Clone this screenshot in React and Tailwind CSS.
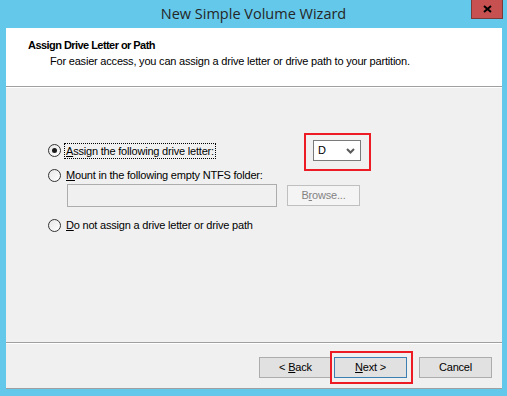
import React from 'react';

const bodyFont = { fontFamily: '"Liberation Sans", Arial, sans-serif' };

function Radio({ checked }) {
    return (
        <span className="flex h-[13px] w-[13px] shrink-0 items-center justify-center rounded-full border border-[#333333] bg-gradient-to-br from-[#e6e6e6] to-white">
            {checked && <span className="h-[5px] w-[5px] rounded-full bg-[#1a1a1a]" />}
        </span>
    );
}

function Btn({ children, isDefault, disabled, className = '' }) {
    return (
        <button
            type="button"
            className={
                'flex h-[21px] w-[73px] items-center justify-center border text-[11px] tracking-[-0.2px] ' +
                (disabled
                    ? 'border-[#bfbfbf] bg-[#f4f4f4] text-[#838383] '
                    : isDefault
                        ? 'border-[#3c7fb1] bg-[#e1e1e1] text-black '
                        : 'border-[#adadad] bg-[#e1e1e1] text-black ') +
                className
            }
        >
            <span className="whitespace-pre">{children}</span>
        </button>
    );
}

export default function App() {
    return (
        <div className="flex h-[396px] w-[507px] flex-col bg-[#63c8ea]" style={bodyFont}>
            {/* title bar */}
            <div className="relative flex h-[28px] items-center justify-center">
                <span
                    className="text-[14.5px] text-[#262626]"
                    style={{ fontFamily: '"Open Sans", "Noto Sans", sans-serif' }}
                >
                    New Simple Volume Wizard
                </span>
                <div className="absolute right-[4px] top-0 flex h-[19px] w-[32px] items-center justify-center border border-t-0 border-[#7b3a3a] bg-[#c75050]">
                    <svg width="9" height="8" viewBox="0 0 9 8">
                        <path d="M1 1 L8 7 M8 1 L1 7" stroke="#000" strokeWidth="2" />
                    </svg>
                </div>
            </div>

            {/* client */}
            <div className="ml-[6px] mr-[5px] flex h-[361px] flex-col bg-[#f0f0f0]">
                <div className="flex h-[58px] flex-col bg-white pl-[22px] pt-[10px]">
                    <span className="text-[11px] font-bold leading-[14px] tracking-[-0.55px] text-black">
                        Assign Drive Letter or Path
                    </span>
                    <span className="mt-[2px] pl-[22px] text-[11px] leading-[14px] tracking-[-0.2px] text-black">
                        For easier access, you can assign a drive letter or drive path to your partition.
                    </span>
                </div>
                <div className="h-[2px] border-t border-[#a0a0a0] bg-white" />

                <div className="flex h-[254px] flex-col pl-[42px] pt-[52px] text-[11px] tracking-[-0.2px] text-black">
                    <div className="flex h-[21px] items-center">
                        <div className="flex w-[265px] items-center gap-[4px]">
                            <Radio checked />
                            <span className="px-[1px] leading-[14px] outline-1 outline-dotted outline-black">
                                <u>A</u>ssign the following drive letter:
                            </span>
                        </div>
                        <div className="relative flex h-[21px] w-[48px] items-center justify-between border border-[#7a7a7a] bg-white pl-[4px] pr-[5px]">
                            <span>D</span>
                            <svg width="9" height="6" viewBox="0 0 9 6">
                                <path d="M1 1 L4.5 4.5 L8 1" stroke="#5a5a5a" strokeWidth="2" fill="none" />
                            </svg>
                            <div className="absolute -bottom-[11px] -left-[10px] -right-[11px] -top-[8px] border-2 border-[#ed1c24]" />
                        </div>
                    </div>

                    <div className="mt-[7px] flex h-[14px] items-center gap-[4px]">
                        <Radio />
                        <span className="px-[1px] leading-[14px]">
                            <u>M</u>ount in the following empty NTFS folder:
                        </span>
                    </div>

                    <div className="mt-[2px] flex h-[23px] items-center pl-[19px]">
                        <div className="h-[23px] w-[210px] border border-[#adadad] bg-[#f0f0f0]" />
                        <Btn disabled className="ml-[10px]">
                            B<u>r</u>owse...
                        </Btn>
                    </div>

                    <div className="mt-[11px] flex h-[14px] items-center gap-[4px]">
                        <Radio />
                        <span className="px-[1px] leading-[14px]">
                            <u>D</u>o not assign a drive letter or drive path
                        </span>
                    </div>
                </div>

                <div className="h-[2px] border-t border-[#a0a0a0] bg-white" />
                <div className="flex flex-1 items-start justify-end border-b border-[#a0a0a0] pr-[10px] pt-[13px]">
                    <Btn>
                        {'< '}<u>B</u>ack
                    </Btn>
                    <div className="relative ml-[2px]">
                        <Btn isDefault>
                            <u>N</u>ext {'>'}
                        </Btn>
                        <div className="absolute -bottom-[6px] -left-[4px] -right-[6px] -top-[6px] border-2 border-[#ed1c24]" />
                    </div>
                    <Btn className="ml-[12px]">Cancel</Btn>
                </div>
            </div>
        </div>
    );
}
